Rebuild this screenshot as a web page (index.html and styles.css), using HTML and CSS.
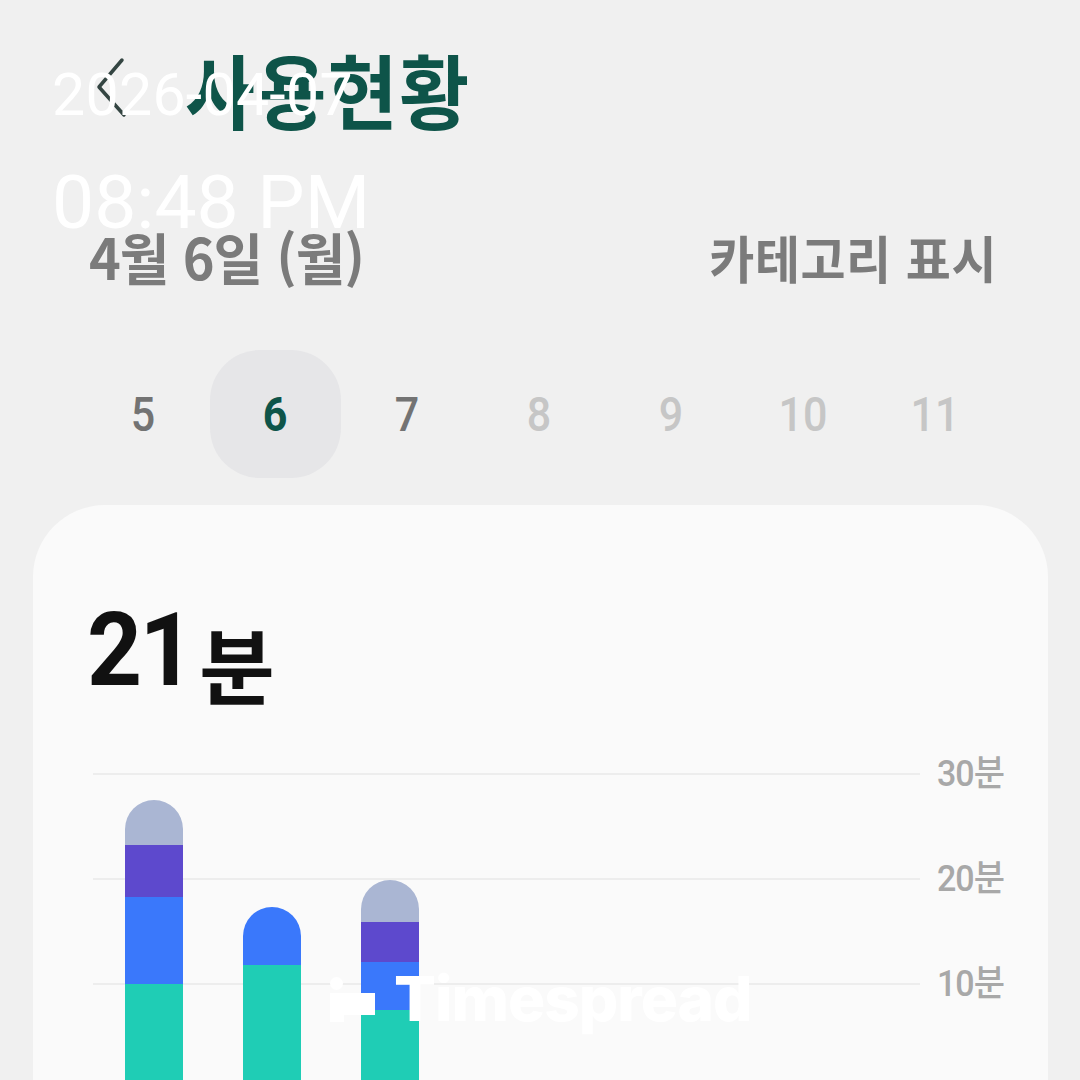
FILE: index.html
```html
<!DOCTYPE html>
<html lang="ko">
<head>
<meta charset="utf-8">
<title>사용현황</title>
<link rel="stylesheet" href="styles.css">
</head>
<body>
<div class="screen">
  <header class="topbar">
    <svg class="back" width="40" height="64" viewBox="0 0 40 64">
      <polyline points="27,4 4,31 29,59" fill="none" stroke="#344542" stroke-width="3.5" stroke-linecap="round" stroke-linejoin="round"/>
    </svg>
    <h1 class="title"><span>사용현황</span></h1>
  </header>

  <div class="datehead">
    <span class="today"><span>4월 6일 (월)</span></span>
    <span class="cat"><span>카테고리 표시</span></span>
  </div>

  <div class="week">
    <div class="day near"><span>5</span></div>
    <div class="day sel"><span>6</span></div>
    <div class="day near"><span>7</span></div>
    <div class="day far"><span>8</span></div>
    <div class="day far"><span>9</span></div>
    <div class="day far"><span>10</span></div>
    <div class="day far"><span>11</span></div>
  </div>

  <section class="card">
    <div class="total"><span class="num">21</span><span class="unit">분</span></div>
    <div class="chart">
      <div class="grid">
        <div class="row"><div class="line"></div><div class="label">30분</div></div>
        <div class="row"><div class="line"></div><div class="label">20분</div></div>
        <div class="row"><div class="line"></div><div class="label">10분</div></div>
      </div>
      <div class="bars">
        <div class="bar">
          <div class="seg c-gray" style="height:45px"></div>
          <div class="seg c-purple" style="height:52px"></div>
          <div class="seg c-blue" style="height:87px"></div>
          <div class="seg c-teal" style="height:104px"></div>
        </div>
        <div class="bar">
          <div class="seg c-blue" style="height:58px"></div>
          <div class="seg c-teal" style="height:123px"></div>
        </div>
        <div class="bar">
          <div class="seg c-gray" style="height:42px"></div>
          <div class="seg c-purple" style="height:40px"></div>
          <div class="seg c-blue" style="height:48px"></div>
          <div class="seg c-teal" style="height:78px"></div>
        </div>
      </div>
    </div>
  </section>

  <div class="stamp">
    <div class="stamp-date">2026-04-07</div>
    <div class="stamp-time">08:48 PM</div>
  </div>

  <div class="watermark">
    <svg width="46" height="46" viewBox="0 0 46 46">
      <circle cx="6.5" cy="6.5" r="6.5" fill="#fff"/>
      <rect x="0" y="16" width="14" height="29" fill="#fff"/>
      <rect x="14" y="16" width="31" height="22" fill="#fff"/>
    </svg>
    <span class="wm-text">Timespread</span>
  </div>
</div>
</body>
</html>
```

FILE: styles.css
```css
* { box-sizing: border-box; }

html, body {
  margin: 0;
  padding: 0;
  background: #f0f0f0;
}

body {
  font-family: Roboto, "Noto Sans CJK KR", sans-serif;
}

.screen {
  position: relative;
  width: 1080px;
  height: 1080px;
  overflow: hidden;
  background: #f0f0f0;
}

/* top bar */
.topbar {
  display: flex;
  align-items: center;
  height: 96px;
  margin-top: 40px;
  padding-left: 95px;
}

.back {
  flex: none;
  display: block;
}

.title {
  margin: 0 0 0 50px;
  font-family: "Noto Sans CJK KR", sans-serif;
  font-weight: 700;
  font-size: 76px;
  line-height: 1;
  color: #0e5449;
  letter-spacing: 1.5px;
}

.title span,
.today span,
.cat span,
.day span,
.total span,
.label {
  display: inline-block;
}

.title span { transform: scaleY(1.06); }

/* date header */
.datehead {
  display: flex;
  justify-content: space-between;
  align-items: center;
  height: 60px;
  margin-top: 90px;
  padding: 0 83px 0 89px;
  font-family: "Noto Sans CJK KR", sans-serif;
  font-weight: 700;
  color: #7b7b7b;
  line-height: 1;
}

.today { font-size: 54px; letter-spacing: -1px; }
.cat { font-size: 49px; letter-spacing: 0.5px; }
.today span, .cat span { transform: scaleY(1.04); }

/* week strip */
.week {
  display: grid;
  grid-template-columns: repeat(7, 132px);
  margin-top: 64px;
  margin-left: 77px;
  height: 128px;
}

.day {
  display: flex;
  align-items: center;
  justify-content: center;
  font-family: Roboto, sans-serif;
  font-size: 43px;
  font-weight: 500;
  line-height: 1;
}

.day span { transform: scaleY(1.12); }

.day.sel {
  background: #e6e6e8;
  border-radius: 50px;
  color: #0e5449;
  font-weight: 700;
  width: 131px;
  justify-self: center;
}

.day.near { color: #737373; }
.day.far { color: #c6c6c6; }

/* card */
.card {
  margin: 27px 32px 0 33px;
  height: 700px;
  background: #fafafa;
  border-radius: 72px;
  padding: 106px 0 0 0;
}

.total {
  display: flex;
  align-items: flex-end;
  padding-left: 54px;
  color: #111;
  line-height: 1;
  height: 90px;
}

.total .num {
  font-family: Roboto, sans-serif;
  font-weight: 700;
  font-size: 96px;
  letter-spacing: -2.5px;
  transform: scaleY(1.06);
  transform-origin: bottom;
}

.total .unit {
  font-family: "Noto Sans CJK KR", sans-serif;
  font-weight: 700;
  font-size: 82px;
  margin-left: 7px;
  position: relative;
  top: 3px;
}

/* chart */
.chart {
  display: grid;
  margin-top: 72px;
  padding-left: 60px;
}

.grid, .bars {
  grid-area: 1 / 1;
}

.row {
  display: flex;
  align-items: flex-start;
  height: 105px;
}

.line {
  width: 827px;
  border-top: 2px solid #ededed;
}

.label {
  margin-left: 17px;
  margin-top: -18px;
  font-family: Roboto, "Noto Sans CJK KR", sans-serif;
  font-size: 34px;
  font-weight: 500;
  line-height: 36px;
  color: #a8a8a8;
  letter-spacing: -1px;
  transform: scaleY(1.08);
}

.bars {
  display: flex;
  align-items: flex-end;
  gap: 60px;
  padding-left: 32px;
  height: 315px;
}

.bar {
  width: 58px;
  display: flex;
  flex-direction: column;
  border-radius: 29px 29px 0 0;
  overflow: hidden;
}

.seg { width: 100%; }
.c-gray { background: #aab6d3; }
.c-purple { background: #5d49cd; }
.c-blue { background: #3a78fb; }
.c-teal { background: #1fcdb5; }

/* overlays */
.stamp {
  position: absolute;
  left: 52px;
  top: 65px;
  color: #fff;
  font-family: Roboto, sans-serif;
  font-weight: 400;
  line-height: 1;
}

.stamp-date { font-size: 59px; letter-spacing: 0.3px; }
.stamp-time { font-size: 75px; margin-top: 41px; }

.watermark {
  position: absolute;
  left: 330px;
  top: 977px;
  display: flex;
  align-items: flex-start;
  gap: 18px;
}

.watermark svg { display: block; }

.wm-text {
  font-family: Inter, sans-serif;
  font-weight: 800;
  font-size: 62px;
  line-height: 1;
  color: #fff;
  margin-top: -9px;
  letter-spacing: -1px;
}
```
